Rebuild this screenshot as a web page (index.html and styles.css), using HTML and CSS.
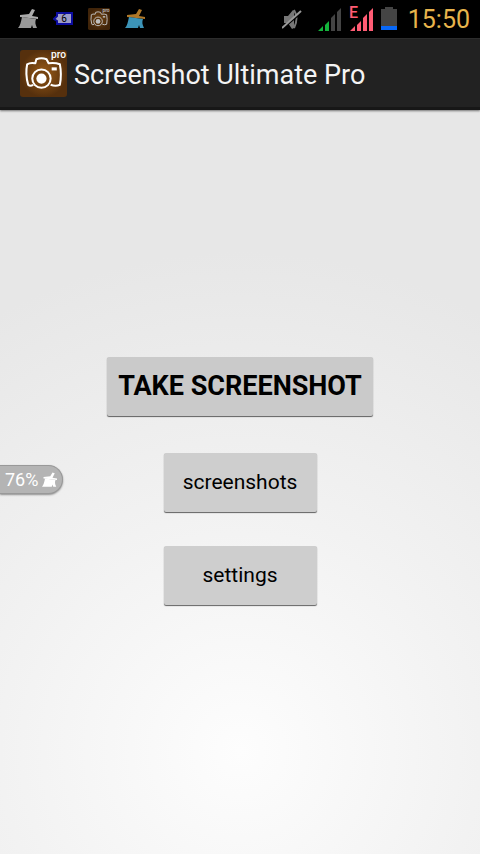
FILE: index.html
```html
<!DOCTYPE html>
<html lang="en">
  <head>
    <meta charset="UTF-8" />
    <meta name="viewport" content="width=device-width, initial-scale=1.0" />
    <title>Screenshot Ultimate Pro</title>
    <link rel="stylesheet" href="styles.css">
  </head>
  <body>
    <!-- shapes used more than once -->
    <svg class="defs" aria-hidden="true">
      <symbol id="broom" viewBox="0 0 20 20">
        <path class="handle" d="M14 0l3 1-3 6 6 1v2L2 8V6l9-1z" />
        <path class="bristles" d="M4 8l14 2c-1 3-1 5 1 9h-4l-1-3-1 3H0c2-2 3-6 4-11z" />
      </symbol>
      <symbol id="camera" viewBox="0 0 46 46">
        <rect width="46" height="46" rx="3" fill="url(#brown)" />
        <g fill="none" stroke="#fff" stroke-width="2" stroke-linejoin="round">
          <path d="M13 34q-3 2-5 0q-3-10-1-20q3-2 8-1l1-4q5-2 10 0l2 4q6-1 11 1q2 10 0 20q-4 2-9 0" />
          <circle cx="21" cy="28" r="9" fill="#75430f" />
        </g>
        <circle cx="21" cy="28" r="5" fill="#fff" />
        <rect x="31" y="17" width="5" height="3" fill="#fff" />
      </symbol>
      <radialGradient id="brown">
        <stop offset="0" stop-color="#9a5c18" />
        <stop offset="1" stop-color="#56300d" />
      </radialGradient>
    </svg>

    <div class="status-bar">
      <div class="notifications">
        <svg class="broom-icon grey"><use href="#broom" /></svg>
        <svg class="count-icon" viewBox="0 0 20 14">
          <path d="M4 1h15v11H4V9L1 7l3-3z" fill="#9c9cc8" stroke="#0c0ca0" stroke-width="2" />
          <text x="11" y="10" text-anchor="middle">6</text>
        </svg>
        <svg class="camera-icon" viewBox="0 0 46 46">
          <use href="#camera" />
          <text x="45" y="9" text-anchor="end" class="pro">pro</text>
        </svg>
        <svg class="broom-icon blue"><use href="#broom" /></svg>
      </div>
      <div class="system">
        <svg class="mute-icon" viewBox="0 0 20 22">
          <path d="M2 8h4l5-6 1 1v17l-2 1-4-6H2z" fill="#777" />
          <path d="M12 2q5 8 0 18" fill="none" stroke="#777" stroke-width="2" />
          <path d="M0 21L20 4" stroke="#000" stroke-width="2" />
          <path d="M0 20L19 3" stroke="#999" stroke-width="2" />
        </svg>
        <svg class="signal-icon" viewBox="0 0 26 26">
          <path d="M1 25l5-5v5zM8 19l4-4v10H8z" fill="#14b43c" />
          <path d="M14 12l4-4v17h-4zM20 6l4-4v23h-4z" fill="#444" />
        </svg>
        <svg class="signal-icon" viewBox="0 0 26 26">
          <path d="M1 25l5-5v5zM8 19l4-4v10H8zM14 12l4-4v17h-4zM20 6l4-4v23h-4z" fill="#ff5c74" />
          <text x="0" y="12">E</text>
        </svg>
        <svg class="battery-icon" viewBox="0 0 16 24">
          <path d="M4 0h8v2h4v18H0V2h4z" fill="#444" />
          <path d="M0 19h16v4H0z" fill="#0868f8" />
        </svg>
        <time>15:50</time>
      </div>
    </div>

    <header class="action-bar">
      <svg class="logo" viewBox="0 0 46 46">
        <use href="#camera" />
        <text x="45" y="8" text-anchor="end" class="pro">pro</text>
      </svg>
      <h1>Screenshot Ultimate Pro</h1>
    </header>

    <main>
      <button type="button" class="take">TAKE SCREENSHOT</button>
      <button type="button">screenshots</button>
      <button type="button">settings</button>
    </main>

    <!-- floats over the app at the screen edge -->
    <div class="memory">
      <span>76%</span>
      <svg class="broom-icon white"><use href="#broom" /></svg>
    </div>
  </body>
</html>
```

FILE: styles.css
```css
* {
  box-sizing: border-box;
}
body {
  display: flex;
  flex-direction: column;
  min-height: 100vh;
  margin: 0;
  font-family: Roboto, "Noto Sans", sans-serif;
  background: radial-gradient(circle at 50% 88%, #fdfdfd 0, #f2f2f2 240px, #e7e7e7 500px);
}
.defs {
  position: absolute;
  width: 0;
  height: 0;
}
.status-bar {
  display: flex;
  justify-content: space-between;
  align-items: center;
  height: 38px;
  padding: 0 10px 0 18px;
  background-color: #000;
}
.notifications {
  display: flex;
  align-items: center;
  gap: 15px;
}
.system {
  display: flex;
  align-items: center;
  gap: 6px;
}
.broom-icon {
  width: 20px;
  height: 20px;
}
.grey {
  --handle: #aaa;
  --bristles: #999;
}
.blue {
  --handle: #b07828;
  --bristles: #3c94b8;
}
.white {
  --handle: #fff;
  --bristles: #fff;
}
.handle {
  fill: var(--handle);
}
.bristles {
  fill: var(--bristles);
}
.count-icon {
  width: 20px;
  height: 14px;
  font-size: 10px;
}
.camera-icon {
  width: 22px;
  height: 22px;
  overflow: visible;
  opacity: 0.75;
}
.pro {
  fill: #fff;
  font-size: 10px;
  font-weight: 500;
}
.mute-icon {
  width: 20px;
  height: 22px;
  margin-right: 9px;
}
.signal-icon {
  width: 26px;
  height: 26px;
  overflow: visible;
  fill: #ff5c74;
  font-size: 16px;
  font-weight: 500;
}
.battery-icon {
  width: 16px;
  height: 24px;
}
time {
  margin-left: 5px;
  color: #e8b44c;
  font-size: 25px;
}
.action-bar {
  display: flex;
  align-items: center;
  gap: 7px;
  height: 72px;
  padding: 0 20px;
  background-color: #222;
  border-top: 1px solid #2c2c2c;
  border-bottom: 3px solid #171717;
  box-shadow: 0 1px 2px rgba(0, 0, 0, 0.5);
}
.logo {
  width: 47px;
  height: 47px;
  overflow: visible;
}
h1 {
  margin: 0;
  padding-top: 3px;
  color: #f4f4f4;
  font-size: 27px;
  font-weight: normal;
}
main {
  display: flex;
  flex: 1;
  flex-direction: column;
  justify-content: center;
  align-items: center;
  gap: 34px;
  padding-bottom: 3px;
}
button {
  min-width: 153px;
  height: 59px;
  padding: 0 11px;
  color: #000;
  background-color: #cecece;
  border: 0;
  border-radius: 2px;
  box-shadow: 0 1px 1px rgba(0, 0, 0, 0.6);
  font-family: inherit;
  font-size: 21px;
  cursor: pointer;
}
button:active {
  background-color: #b5b5b5;
}
.take {
  margin-bottom: 3px;
  background-color: #cacaca;
  font-size: 27px;
  font-weight: bold;
}
.memory {
  position: absolute;
  top: 465px;
  left: 0;
  display: flex;
  align-items: center;
  gap: 4px;
  height: 29px;
  padding: 0 5px;
  color: #fff;
  background-color: #b4b4b4;
  border: 1px solid #999;
  border-left: 0;
  border-radius: 0 15px 15px 0;
  box-shadow: 0 1px 2px rgba(0, 0, 0, 0.4);
  font-size: 18px;
}
.memory .broom-icon {
  width: 15px;
  height: 16px;
}
```
